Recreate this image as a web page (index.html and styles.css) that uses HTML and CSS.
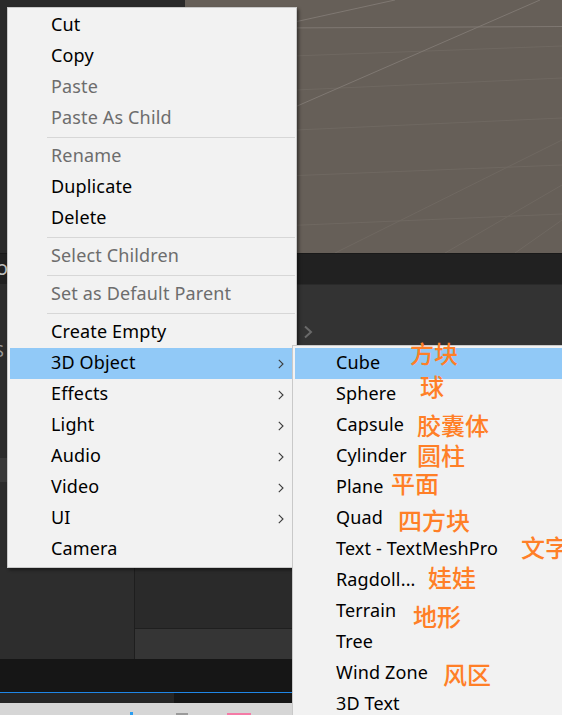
FILE: index.html
```html
<!DOCTYPE html>
<html lang="zh-CN">
<head>
<meta charset="utf-8">
<title>Context menu</title>
<link rel="stylesheet" href="styles.css">
</head>
<body>
<div class="screen">
  <div class="top">
    <div class="hier"></div>
    <div class="scene">
      <svg class="grid" width="377" height="253" viewBox="0 0 377 253">
        <g stroke="#6f6861" stroke-width="1" fill="none">
          <line x1="0" y1="60" x2="377" y2="46"/>
          <line x1="0" y1="95" x2="377" y2="78"/>
          <line x1="0" y1="135" x2="377" y2="118"/>
          <line x1="0" y1="180" x2="377" y2="165"/>
          <line x1="0" y1="230" x2="377" y2="214"/>
          <line x1="150" y1="253" x2="377" y2="140"/>
          <line x1="260" y1="253" x2="377" y2="185"/>
          <line x1="330" y1="253" x2="377" y2="220"/>
        </g>
        <g stroke="#7f7872" stroke-width="1" fill="none">
          <line x1="0" y1="28.5" x2="377" y2="26.5"/>
          <line x1="0" y1="155" x2="355" y2="0"/>
          <line x1="0" y1="46" x2="210" y2="0"/>
        </g>
      </svg>
    </div>
  </div>
  <div class="band"><span class="clip-o">o</span></div>
  <div class="mid">
    <div class="mid-left">
      <span class="clip-s">S</span>
      <div class="mid-hl"></div>
    </div>
    <div class="mid-right">
      <svg class="tab-chev" width="10" height="14" viewBox="0 0 10 14"><path d="M2 1.5 L8 7 L2 12.5" stroke="#6a6a6a" stroke-width="2" fill="none"/></svg>
    </div>
  </div>
  <div class="lower">
    <div class="col1"></div>
    <div class="col2"><div class="col2a"></div><div class="col2b"></div></div>
  </div>
  <div class="console"></div>
  <div class="blue"></div>
  <div class="tabs"><div class="tab-a"></div></div>
  <div class="status">
    <span class="bit bit-blue"></span>
    <span class="bit bit-gray"></span>
    <span class="bit bit-pink"></span>
  </div>

  <div class="menu main-menu">
    <div class="item"><span class="label">Cut</span></div>
    <div class="item"><span class="label">Copy</span></div>
    <div class="item dis"><span class="label">Paste</span></div>
    <div class="item dis"><span class="label">Paste As Child</span></div>
    <div class="sep"></div>
    <div class="item dis"><span class="label">Rename</span></div>
    <div class="item"><span class="label">Duplicate</span></div>
    <div class="item"><span class="label">Delete</span></div>
    <div class="sep"></div>
    <div class="item dis"><span class="label">Select Children</span></div>
    <div class="sep"></div>
    <div class="item dis"><span class="label">Set as Default Parent</span></div>
    <div class="sep"></div>
    <div class="item"><span class="label">Create Empty</span></div>
    <div class="item sel"><span class="label">3D Object</span><svg class="chev" width="6" height="10" viewBox="0 0 6 10"><path d="M0.8 0.8 L5 5 L0.8 9.2" stroke="#3c3c3c" stroke-width="1.1" fill="none"/></svg></div>
    <div class="item"><span class="label">Effects</span><svg class="chev" width="6" height="10" viewBox="0 0 6 10"><path d="M0.8 0.8 L5 5 L0.8 9.2" stroke="#3c3c3c" stroke-width="1.1" fill="none"/></svg></div>
    <div class="item"><span class="label">Light</span><svg class="chev" width="6" height="10" viewBox="0 0 6 10"><path d="M0.8 0.8 L5 5 L0.8 9.2" stroke="#3c3c3c" stroke-width="1.1" fill="none"/></svg></div>
    <div class="item"><span class="label">Audio</span><svg class="chev" width="6" height="10" viewBox="0 0 6 10"><path d="M0.8 0.8 L5 5 L0.8 9.2" stroke="#3c3c3c" stroke-width="1.1" fill="none"/></svg></div>
    <div class="item"><span class="label">Video</span><svg class="chev" width="6" height="10" viewBox="0 0 6 10"><path d="M0.8 0.8 L5 5 L0.8 9.2" stroke="#3c3c3c" stroke-width="1.1" fill="none"/></svg></div>
    <div class="item"><span class="label">UI</span><svg class="chev" width="6" height="10" viewBox="0 0 6 10"><path d="M0.8 0.8 L5 5 L0.8 9.2" stroke="#3c3c3c" stroke-width="1.1" fill="none"/></svg></div>
    <div class="item"><span class="label">Camera</span></div>
  </div>

  <div class="menu sub-menu">
    <div class="item sel"><span class="label">Cube</span><span class="note n-cube">方块</span></div>
    <div class="item"><span class="label">Sphere</span><span class="note n-sphere">球</span></div>
    <div class="item"><span class="label">Capsule</span><span class="note n-capsule">胶囊体</span></div>
    <div class="item"><span class="label">Cylinder</span><span class="note n-cyl">圆柱</span></div>
    <div class="item"><span class="label">Plane</span><span class="note n-plane">平面</span></div>
    <div class="item"><span class="label">Quad</span><span class="note n-quad">四方块</span></div>
    <div class="item"><span class="label">Text - TextMeshPro</span><span class="note n-text">文字</span></div>
    <div class="item"><span class="label">Ragdoll...</span><span class="note n-rag">娃娃</span></div>
    <div class="item"><span class="label">Terrain</span><span class="note n-terrain">地形</span></div>
    <div class="item"><span class="label">Tree</span></div>
    <div class="item"><span class="label">Wind Zone</span><span class="note n-wind">风区</span></div>
    <div class="item"><span class="label">3D Text</span></div>
  </div>
</div>
</body>
</html>
```
FILE: styles.css
```css
* { box-sizing: border-box; }
html, body { margin: 0; padding: 0; background: #161616; }
.screen {
  position: relative;
  width: 562px;
  height: 715px;
  overflow: hidden;
  display: flex;
  flex-direction: column;
  font-family: "Noto Sans", "Noto Sans CJK SC", sans-serif;
}

/* background editor panels */
.top { height: 253px; display: flex; }
.hier { width: 185px; background: #2a2a2a; }
.scene { flex: 1; background: #665f58; overflow: hidden; }
.grid { display: block; }
.band {
  height: 31px;
  background: #212121;
  border-top: 1px solid #191919;
  display: flex;
  align-items: center;
}
.clip-o { margin-left: -4px; color: #bdbdbd; font-size: 20px; line-height: 20px; margin-top: -2px; }
.mid { height: 283px; display: flex; }
.mid-left { width: 185px; background: #2c2c2c; display: flex; flex-direction: column; }
.clip-s { margin-top: 59px; margin-left: -5px; height: 16px; color: #9c9c9c; font-size: 16px; line-height: 16px; }
.mid-hl { margin-top: 99px; height: 24px; background: #393939; }
.mid-right { flex: 1; background: #333333; padding: 40px 0 0 118px; border-top: 1px solid #2a2a2a; }
.tab-chev { display: block; }
.lower { height: 92px; display: flex; }
.col1 { width: 135px; background: #2d2d2d; border-right: 1px solid #1e1e1e; }
.col2 { flex: 1; display: flex; flex-direction: column; }
.col2a { flex: 1; background: #2a2a2a; }
.col2b { height: 31px; background: #353535; border-top: 1px solid #1f1f1f; }
.console { height: 33px; background: #161616; }
.blue { height: 1px; background: #1f86e6; }
.tabs { height: 10px; background: #161616; display: flex; }
.tab-a { width: 174px; background: #252525; }
.status { flex: 1; background: #d6d6d6; display: flex; align-items: flex-end; }
.bit { display: block; }
.bit-blue { margin-left: 130px; width: 3px; height: 3px; background: #2a9df0; }
.bit-gray { margin-left: 43px; width: 12px; height: 2px; background: #9a9a9a; }
.bit-pink { margin-left: 39px; width: 24px; height: 2px; background: #f47aa6; }

/* menus */
.menu {
  position: absolute;
  background: #f2f2f2;
  border: 1px solid #c9c9c9;
  color: #000;
  font-size: 18px;
  letter-spacing: 0.15px;
}
.main-menu {
  left: 7px;
  top: 7px;
  width: 290px;
  padding: 2px 4px 2px 2px;
  box-shadow: 2px 2px 3px rgba(0, 0, 0, 0.45);
}
.sub-menu {
  left: 292px;
  top: 345px;
  width: 300px;
  padding: 2px 0 2px 2px;
}
.item {
  position: relative;
  height: 31px;
  display: flex;
  align-items: center;
  padding: 0 8px 0 41px;
  white-space: nowrap;
}
.item .label { flex: 1; line-height: 29px; height: 31px; }
.item.dis { color: #6d6d6d; }
.item.sel { background: #91c9f7; }
.chev { display: block; flex: none; }
.sep {
  height: 7px;
  margin: 0 -3px 0 37px;
  display: flex;
  align-items: center;
}
.sep::before { content: ""; flex: 1; height: 1px; background: #d7d7d7; }

/* orange annotations written over the sub menu */
.note {
  position: absolute;
  font-family: "Noto Sans CJK SC", sans-serif;
  font-weight: 500;
  font-size: 24px;
  line-height: 24px;
  letter-spacing: 0;
  color: #ff7f27;
}
.n-cube { left: 115px; top: -7px; }
.n-sphere { left: 125px; top: -5px; }
.n-capsule { left: 122px; top: 3px; }
.n-cyl { left: 122px; top: 2px; }
.n-plane { left: 96px; top: -1px; }
.n-quad { left: 103px; top: 5px; }
.n-text { left: 226px; top: 1px; }
.n-rag { left: 133px; top: 0px; }
.n-terrain { left: 118px; top: 8px; }
.n-wind { left: 148px; top: 4px; }
```
